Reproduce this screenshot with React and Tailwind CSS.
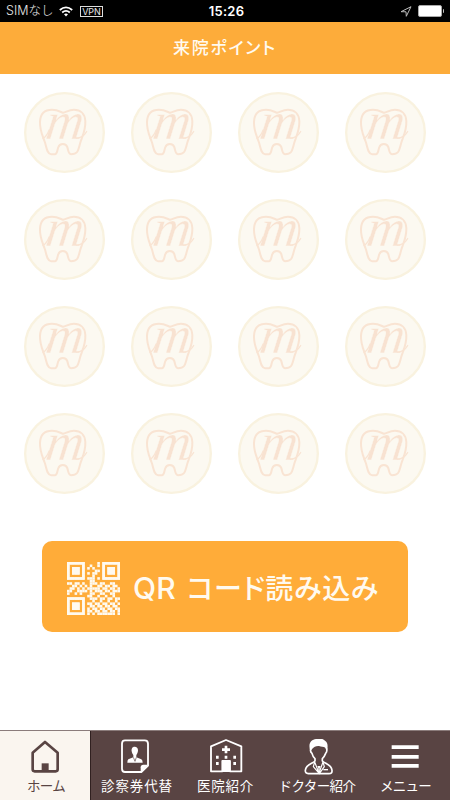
const JP = "font-['Noto_Sans_CJK_JP',sans-serif]";

function Stamp() {
  return (
    <svg className="h-[81px] w-[81px]" viewBox="27 20.5 243 243" fill="none">
      <circle cx="148.5" cy="142" r="118" fill="#fcf9f1" stroke="#f9f2df" strokeWidth="7" />
      <text x="90" y="163" fontSize="160" fontStyle="italic" textLength="112" lengthAdjust="spacingAndGlyphs" fill="#f8e2d1" stroke="#fcf9f1" strokeWidth="1" transform="translate(21 0) skewX(-8)" className="font-['Liberation_Serif',serif]">m</text>
      <g stroke="#f9e4d3" strokeWidth="6" strokeLinecap="round" strokeLinejoin="round">
        <path d="M144 83C132 78 126 74 111 74C88 74 76 88 75 110C74 137 83 151 90 172C95 190 97 207 108 207H120C127 207 126 196 130 186C134 173 153 173 157 186C160 196 160 207 168 207C187 207 189 200 195 176C200 155 212 139 211 108C210 86 196 74 177 74C162 74 155 80 144 83" />
        <path d="M84 160C94 155 98 146 103 134M184 159C200 158 209 150 215 139" strokeWidth="4" />
      </g>
    </svg>
  );
}

const QR = [
  "111111100000101111111",
  "100000100100101000001",
  "101110101010001011101",
  "101110100001101011101",
  "101110101011001011101",
  "100000100010001000001",
  "111111101110101111111",
  "000000000110000000000",
  "110110100111011001100",
  "001101010100110110110",
  "011010101111101101101",
  "110011110101110110111",
  "100101000110011001100",
  "000000001100100100100",
  "111111100111011011011",
  "100000100010010010010",
  "101110101101101101101",
  "101110100110110110110",
  "101110101011011011011",
  "100000101101101101101",
  "111111101010111111101",
];

function QrIcon() {
  return (
    <svg className="mt-[5px] h-[53px] w-[53px]" viewBox="0 0 21 21" fill="#fffaf0">
      {QR.map((row, y) =>
        [...row].map((c, x) => (c === "1" ? <rect key={`${x}-${y}`} x={x} y={y} width="1.03" height="1.03" /> : null))
      )}
      <path d="M0 0H7V7H0ZM1 1V6H6V1ZM14 0H21V7H14ZM15 1V6H20V1ZM0 14H7V21H0ZM1 15V20H6V15Z" fillRule="evenodd" />
      <path d="M2 2H5V5H2ZM16 2H19V5H16ZM2 16H5V19H2Z" />
    </svg>
  );
}

function HomeIcon() {
  return (
    <svg className="h-9 w-9" viewBox="82 44 108 108" fill="none">
      <path d="M136 53L174 85V135Q174 141 168 141H105Q99 141 99 135V85Z" stroke="#594443" strokeWidth="8" strokeLinejoin="round" />
      <path d="M126 117H147V142H126Z" fill="#594443" />
    </svg>
  );
}

function CardIcon() {
  return (
    <svg className="h-9 w-9" viewBox="55 43 108 108" fill="none">
      <path d="M76 47H135Q145 47 145 57V123L125 142H76Q67 142 67 132V57Q67 47 76 47Z" stroke="#fff" strokeWidth="5.5" />
      <path d="M145 120H131Q123 120 123 128V142Z" fill="#fff" />
      <path d="M105 66C97 66 95 73 96 80C97 86 99 89 101 91V98L86 104Q83 106 83 114H129Q129 106 125 104L110 98V91C113 88 115 82 115 77C115 70 111 66 105 66Z" fill="#fff" />
      <path d="M101 98L106 110L110 98" stroke="#594443" strokeWidth="2" />
    </svg>
  );
}

function HospitalIcon() {
  return (
    <svg className="h-9 w-9" viewBox="323 43 108 108" fill="none">
      <path d="M332 140V65L377 46L423 65V140H389V109H366V140Z" stroke="#fff" strokeWidth="5.5" strokeLinejoin="round" />
      <path d="M366 108H389V142H366ZM373 63H381V71H389V79H381V86H373V79H365V71H373ZM347 93H355V102H347ZM373 93H381V102H373ZM399 93H407V102H399ZM347 112H355V121H347ZM399 112H407V121H399Z" fill="#fff" />
    </svg>
  );
}

function DoctorIcon() {
  return (
    <svg className="h-9 w-9" viewBox="81 43 108 108" fill="none">
      <path d="M124 68C120 76 121 82 126 86C128 94 131 99 135 102V109C128 117 107 119 106 137Q105 146 115 147H177Q187 147 186 137C185 119 164 117 157 109V102C162 98 165 91 167 86C172 80 171 73 168 67" stroke="#fff" strokeWidth="5" strokeLinejoin="round" />
      <path d="M121 79C113 55 124 45 138 43C150 40 159 42 165 48C174 53 174 65 171 79L166 69C160 66 154 67 147 64C139 63 131 67 127 72Z" fill="#fff" />
      <path d="M134 112L147 145L159 112L163 126L148 147L130 126Z" stroke="#fff" strokeWidth="3.5" strokeLinejoin="round" />
      <path d="M142 124H152L149 131V144H145V131Z" fill="#fff" />
      <path d="M160 135H174" stroke="#fff" strokeWidth="4" />
    </svg>
  );
}

function MenuIcon() {
  return (
    <svg className="h-9 w-9" viewBox="352 43 108 108" fill="#fff">
      <path d="M366 62H447V73H366ZM366 91H447V102H366ZM366 118H447V129H366Z" />
    </svg>
  );
}

const tabs = [
  { label: "ホーム", Icon: HomeIcon, text: "pl-[2px] tracking-[-0.7px]" },
  { label: "診察券代替", Icon: CardIcon, text: "pl-[2px] tracking-[0.9px]" },
  { label: "医院紹介", Icon: HospitalIcon, text: "tracking-[0.8px]" },
  { label: "ドクター紹介", Icon: DoctorIcon, text: "pl-[4px] tracking-[-0.6px]" },
  { label: "メニュー", Icon: MenuIcon, text: "pl-[1px] tracking-[-0.7px]" },
];

export default function App() {
  return (
    <div className={`flex h-[800px] w-[450px] flex-col overflow-hidden bg-white ${JP}`}>
      <div className="grid h-[22px] shrink-0 grid-cols-3 items-center bg-black text-[#e8e8e8]">
        <div className="flex items-center pl-[6px]">
          <span className="w-[53px] whitespace-nowrap font-['Inter','Noto_Sans_CJK_JP',sans-serif] text-[12.5px] leading-[22px] font-light">SIMなし</span>
          <svg className="h-[11px] w-[14px]" viewBox="0 0 14 11" fill="none" stroke="#fff" strokeWidth="1.8">
            <path d="M.8 4Q7-1.2 13.2 4M3.2 6.5Q7 3.3 10.8 6.5" />
            <path d="M5 8.3Q7 6.7 9 8.3L7 10.6Z" fill="#fff" stroke="none" />
          </svg>
          <span className="ml-[7px] flex h-[11px] w-[23px] items-center justify-center border border-[#ddd] font-['Inter',sans-serif] text-[9px] leading-none">VPN</span>
        </div>
        <span className="pl-[3px] text-center font-['Inter',sans-serif] text-[13px] leading-[22px] font-semibold tracking-[0.3px] text-white">15:26</span>
        <div className="flex items-center justify-end pr-[6px]">
          <svg className="mr-[6px] h-[11px] w-[12px]" viewBox="0 0 12 11" fill="none" stroke="#bbb">
            <path d="M1 5.7L11 .7L6.3 10.3L6 5.8Z" />
          </svg>
          <span className="h-3 w-6 rounded-[2px] border border-[#aaa] bg-white" />
          <span className="ml-px h-1 w-[1.5px] rounded-r bg-[#bbb]" />
        </div>
      </div>

      <header className="flex h-[52px] shrink-0 items-center justify-center bg-[#fdac3a]">
        <h1 className="pb-[3px] text-[17px] leading-6 font-medium tracking-[1.7px] text-[#fffaf0] [font-feature-settings:'palt']">来院ポイント</h1>
      </header>

      <main className="flex flex-1 flex-col items-center">
        <div className="mt-[17.5px] grid grid-cols-4 gap-x-[26px] gap-y-[26.3px]">
          {Array.from({ length: 16 }, (_, i) => <Stamp key={i} />)}
        </div>
        <button className="mt-[46.6px] flex h-[91px] w-[366px] items-center rounded-[10px] bg-[#ffac39] pl-[25px]">
          <QrIcon />
          <span className="ml-[13px] whitespace-nowrap pt-[3px] text-[28px] leading-none font-medium text-[#fffaf0] [font-feature-settings:'palt']">
            <span className="font-['Inter',sans-serif] text-[30px] tracking-[0.2px]">QR</span>
            <span className="ml-[11px] tracking-[0.7px]">コード読み込み</span>
          </span>
        </button>
      </main>

      <nav className="grid h-[70px] shrink-0 grid-cols-[91px_90px_89px_90px_90px] border-t border-[#8b7c7b] bg-[#594443]">
        {tabs.map(({ label, Icon, text }, i) => (
          <a
            key={label}
            className={`flex flex-col items-center pt-[8px] ${i === 0 ? "border-r border-[#302020] bg-[#faf5ef] text-[#594443]" : "text-white"}`}
          >
            <Icon />
            <span className={`whitespace-nowrap text-[13.5px] leading-5 ${text}`}>{label}</span>
          </a>
        ))}
      </nav>
    </div>
  );
}
